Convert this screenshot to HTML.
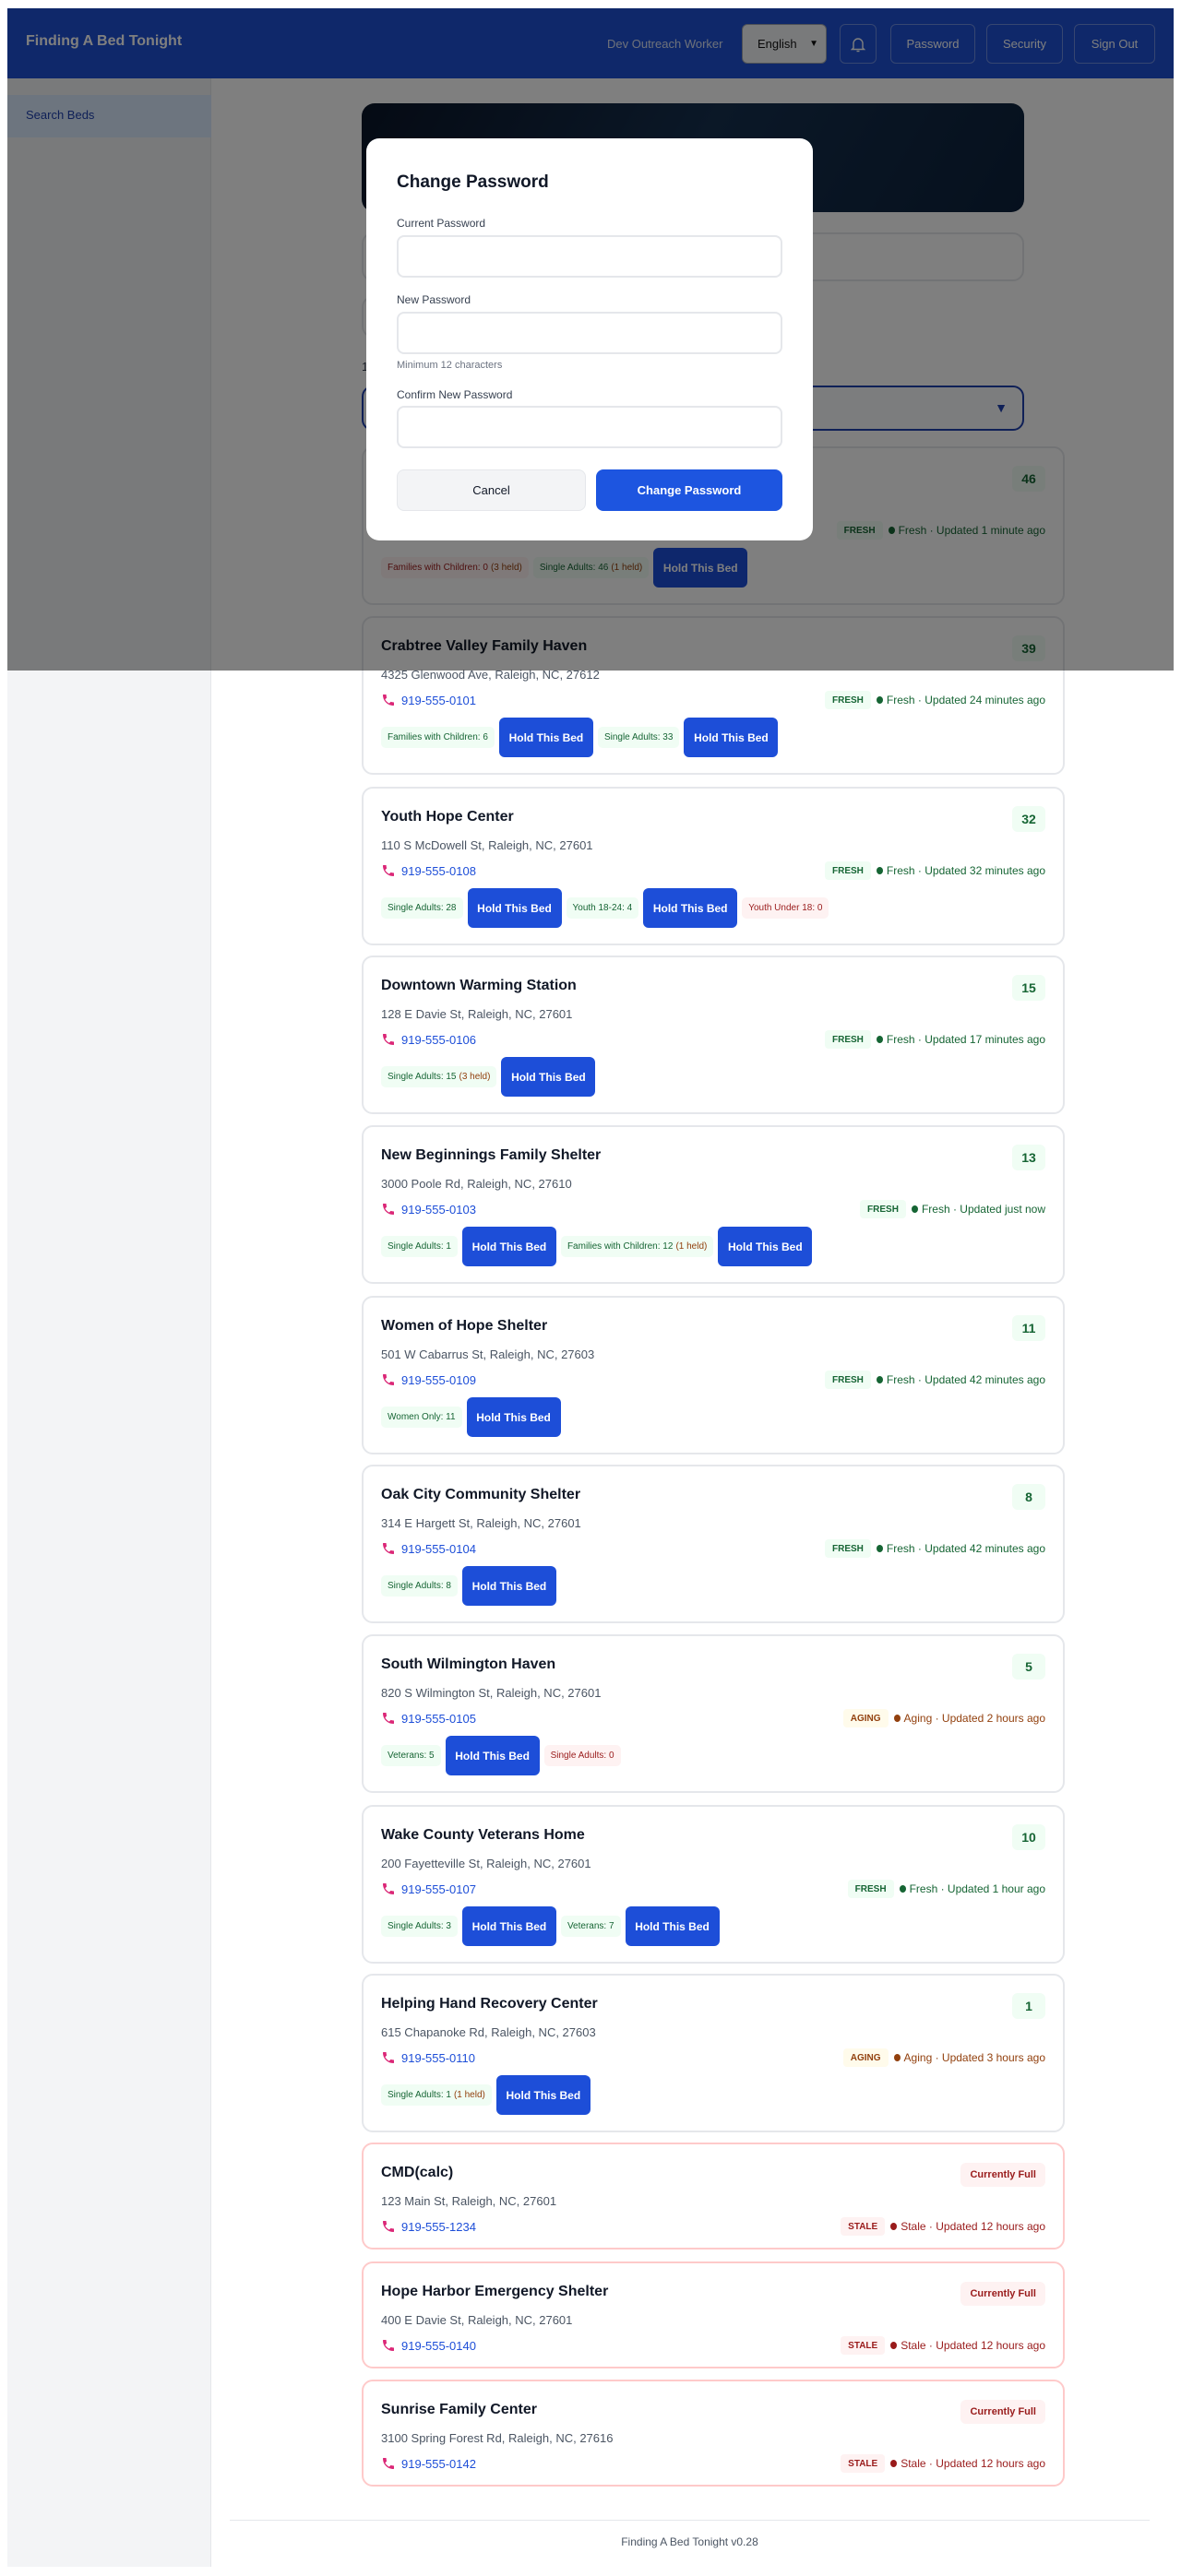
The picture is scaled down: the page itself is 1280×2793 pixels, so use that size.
<!DOCTYPE html>
<html><head><meta charset="utf-8"><style>
*{box-sizing:border-box;margin:0;padding:0}
body{width:1280px;height:2793px;position:relative;background:#fff;font-family:"Liberation Sans",sans-serif;overflow:hidden}
.hdr{position:absolute;left:8px;top:9px;width:1264px;height:76px;background:#1e50d4;color:#fff}
.hdr .t{position:absolute;left:20px;top:27px;font-weight:bold;font-size:16px}
.hdr .u{position:absolute;left:650px;top:31px;font-size:13px;color:#dbe3f5}
.hb{position:absolute;top:17px;height:43px;border:1px solid rgba(255,255,255,.35);border-radius:6px;color:#fff;font-size:13px;display:flex;align-items:center;justify-content:center}
.side{position:absolute;left:8px;top:85px;width:221px;height:2698px;background:#f3f4f6;border-right:1px solid #e5e7eb}
.side .a{position:absolute;left:0;top:18px;width:221px;height:46px;background:#dbeafe;color:#1e40af;font-size:13px;padding:14px 0 0 20px}
.hero{position:absolute;left:392px;top:112px;width:718px;height:118px;border-radius:14px;background:linear-gradient(120deg,#0a1528,#16304f 50%,#0c213b)}
.box{position:absolute;border:2px solid #e5e7eb;border-radius:12px;background:#fff}
.card{position:absolute;left:392px;width:762px;height:172px;border:2px solid #e5e7eb;border-radius:12px;background:#fff;padding:0 19px}
.card.st{height:116px;border-color:#fecaca}
.nm{position:absolute;left:19px;top:22px;font-size:16px;font-weight:bold;color:#111827}
.ad{position:absolute;left:19px;top:54px;font-size:13px;color:#4b5563}
.ph{position:absolute;left:19px;top:81px;font-size:13px;color:#1d4ed8;display:flex;align-items:center;gap:6px}
.cnt{position:absolute;right:19px;top:19px;height:28px;min-width:36px;padding:0 8px;background:#f0fdf4;color:#166534;font-weight:bold;font-size:14px;border-radius:6px;display:flex;align-items:center;justify-content:center}
.full{position:absolute;right:19px;top:20px;height:26px;padding:0 10px;background:#fef2f2;color:#991b1b;font-weight:bold;font-size:11px;border-radius:6px;display:flex;align-items:center}
.stt{position:absolute;right:19px;top:79px;display:flex;align-items:center;gap:6px;font-size:12px}
.pill{height:20px;padding:0 8px;font-size:10px;font-weight:bold;border-radius:4px;display:flex;align-items:center}
.dot{width:7px;height:8px;border-radius:50%;display:inline-block;margin-right:4px}
.g .pill{background:#f0fdf4;color:#166534}.g{color:#166534}.g .dot{background:#166534}
.y .pill{background:#fffbeb;color:#92400e}.y{color:#92400e}.y .dot{background:#92400e}
.r .pill{background:#fef2f2;color:#991b1b}.r{color:#991b1b}.r .dot{background:#991b1b}
.row{position:absolute;left:19px;top:108px;display:flex;align-items:center;gap:5px}
.ch{height:23px;padding:0 7px;font-size:10px;border-radius:5px;display:flex;align-items:center;background:#f0fdf4;color:#166534}
.ch.rd{background:#fef2f2;color:#991b1b}
.ch i{font-style:normal;color:#92400e;margin-left:3px}
.hold{width:102px;height:43px;background:#1d4ed8;color:#fff;font-weight:bold;font-size:12px;border-radius:6px;display:flex;align-items:center;justify-content:center}
.ov{position:absolute;left:8px;top:9px;width:1264px;height:718px;background:rgba(0,0,0,.5)}
.modal{position:absolute;left:397px;top:150px;width:484px;height:436px;background:#fff;border-radius:14px;padding:0 33px}
.modal h2{position:absolute;left:33px;top:187px;font-size:19px}
.lb{position:absolute;left:33px;font-size:12px;color:#374151}
.in{position:absolute;left:33px;width:418px;height:46px;border:2px solid #e5e7eb;border-radius:8px}
.btn{position:absolute;top:359px;height:45px;border-radius:8px;display:flex;align-items:center;justify-content:center;font-size:13px}
.ft{position:absolute;left:249px;top:2732px;width:997px;border-top:1px solid #e5e7eb;text-align:center;font-size:12px;color:#4b5563;padding-top:16px}
</style></head><body>
<div class="hdr"><div class="t">Finding A Bed Tonight</div><div class="u">Dev Outreach Worker</div>
<div class="hb" style="left:796px;width:92px;background:#f3f4f6;color:#111;border-color:#9ca3af;justify-content:flex-start;padding-left:16px">English<span style="position:absolute;right:8px;font-size:10px">&#9660;</span></div>
<div class="hb" style="left:902px;width:40px"><svg width="16" height="18" viewBox="0 0 16 18" fill="none" stroke="#fff" stroke-width="1.4"><path d="M3 13V8a5 5 0 0 1 10 0v5l1.5 1.5h-13z"/><path d="M6.5 16.5h3"/></svg></div>
<div class="hb" style="left:957px;width:92px">Password</div>
<div class="hb" style="left:1061px;width:83px">Security</div>
<div class="hb" style="left:1156px;width:88px">Sign Out</div>
</div>
<div class="side"><div class="a">Search Beds</div></div>
<div class="hero"></div>
<div class="box" style="left:392px;top:252px;width:718px;height:53px"></div>
<div class="box" style="left:392px;top:321px;width:300px;height:45px"></div>
<div style="position:absolute;left:392px;top:390px;font-size:13px;color:#374151">13 shelters found</div>
<div class="box" style="left:392px;top:418px;width:718px;height:49px;border-color:#1e40af;background:#f8fafc"><span style="position:absolute;right:16px;top:14px;color:#1e40af;font-size:14px">&#9660;</span></div>

<!-- cards -->
<div class="card" style="top:484px"><div class="nm">Capital Area Emergency Shelter</div><div class="ad">500 W Morgan St, Raleigh, NC, 27603</div><div class="ph"><svg width="16" height="16" viewBox="0 0 24 24"><path fill="#db2777" d="M6.6 10.8c1.4 2.8 3.8 5.1 6.6 6.6l2.2-2.2c.3-.3.7-.4 1-.2 1.1.4 2.3.6 3.6.6.6 0 1 .4 1 1V20c0 .6-.4 1-1 1C10.6 21 3 13.4 3 4c0-.6.4-1 1-1h3.5c.6 0 1 .4 1 1 0 1.3.2 2.5.6 3.6.1.3 0 .7-.2 1z"/></svg>919-555-0100</div><div class="cnt">46</div><div class="stt g"><span class="pill">FRESH</span><span><span class="dot"></span>Fresh · Updated 1 minute ago</span></div><div class="row"><span class="ch rd">Families with Children: 0<i>(3 held)</i></span><span class="ch">Single Adults: 46<i>(1 held)</i></span><span class="hold">Hold This Bed</span></div></div>

<div class="card" style="top:668px"><div class="nm">Crabtree Valley Family Haven</div><div class="ad">4325 Glenwood Ave, Raleigh, NC, 27612</div><div class="ph"><svg width="16" height="16" viewBox="0 0 24 24"><path fill="#db2777" d="M6.6 10.8c1.4 2.8 3.8 5.1 6.6 6.6l2.2-2.2c.3-.3.7-.4 1-.2 1.1.4 2.3.6 3.6.6.6 0 1 .4 1 1V20c0 .6-.4 1-1 1C10.6 21 3 13.4 3 4c0-.6.4-1 1-1h3.5c.6 0 1 .4 1 1 0 1.3.2 2.5.6 3.6.1.3 0 .7-.2 1z"/></svg>919-555-0101</div><div class="cnt">39</div><div class="stt g"><span class="pill">FRESH</span><span><span class="dot"></span>Fresh · Updated 24 minutes ago</span></div><div class="row"><span class="ch">Families with Children: 6</span><span class="hold">Hold This Bed</span><span class="ch">Single Adults: 33</span><span class="hold">Hold This Bed</span></div></div>

<div class="card" style="top:853px"><div class="nm">Youth Hope Center</div><div class="ad">110 S McDowell St, Raleigh, NC, 27601</div><div class="ph"><svg width="16" height="16" viewBox="0 0 24 24"><path fill="#db2777" d="M6.6 10.8c1.4 2.8 3.8 5.1 6.6 6.6l2.2-2.2c.3-.3.7-.4 1-.2 1.1.4 2.3.6 3.6.6.6 0 1 .4 1 1V20c0 .6-.4 1-1 1C10.6 21 3 13.4 3 4c0-.6.4-1 1-1h3.5c.6 0 1 .4 1 1 0 1.3.2 2.5.6 3.6.1.3 0 .7-.2 1z"/></svg>919-555-0108</div><div class="cnt">32</div><div class="stt g"><span class="pill">FRESH</span><span><span class="dot"></span>Fresh · Updated 32 minutes ago</span></div><div class="row"><span class="ch">Single Adults: 28</span><span class="hold">Hold This Bed</span><span class="ch">Youth 18-24: 4</span><span class="hold">Hold This Bed</span><span class="ch rd">Youth Under 18: 0</span></div></div>

<div class="card" style="top:1036px"><div class="nm">Downtown Warming Station</div><div class="ad">128 E Davie St, Raleigh, NC, 27601</div><div class="ph"><svg width="16" height="16" viewBox="0 0 24 24"><path fill="#db2777" d="M6.6 10.8c1.4 2.8 3.8 5.1 6.6 6.6l2.2-2.2c.3-.3.7-.4 1-.2 1.1.4 2.3.6 3.6.6.6 0 1 .4 1 1V20c0 .6-.4 1-1 1C10.6 21 3 13.4 3 4c0-.6.4-1 1-1h3.5c.6 0 1 .4 1 1 0 1.3.2 2.5.6 3.6.1.3 0 .7-.2 1z"/></svg>919-555-0106</div><div class="cnt">15</div><div class="stt g"><span class="pill">FRESH</span><span><span class="dot"></span>Fresh · Updated 17 minutes ago</span></div><div class="row"><span class="ch">Single Adults: 15<i>(3 held)</i></span><span class="hold">Hold This Bed</span></div></div>

<div class="card" style="top:1220px"><div class="nm">New Beginnings Family Shelter</div><div class="ad">3000 Poole Rd, Raleigh, NC, 27610</div><div class="ph"><svg width="16" height="16" viewBox="0 0 24 24"><path fill="#db2777" d="M6.6 10.8c1.4 2.8 3.8 5.1 6.6 6.6l2.2-2.2c.3-.3.7-.4 1-.2 1.1.4 2.3.6 3.6.6.6 0 1 .4 1 1V20c0 .6-.4 1-1 1C10.6 21 3 13.4 3 4c0-.6.4-1 1-1h3.5c.6 0 1 .4 1 1 0 1.3.2 2.5.6 3.6.1.3 0 .7-.2 1z"/></svg>919-555-0103</div><div class="cnt">13</div><div class="stt g"><span class="pill">FRESH</span><span><span class="dot"></span>Fresh · Updated just now</span></div><div class="row"><span class="ch">Single Adults: 1</span><span class="hold">Hold This Bed</span><span class="ch">Families with Children: 12<i>(1 held)</i></span><span class="hold">Hold This Bed</span></div></div>

<div class="card" style="top:1405px"><div class="nm">Women of Hope Shelter</div><div class="ad">501 W Cabarrus St, Raleigh, NC, 27603</div><div class="ph"><svg width="16" height="16" viewBox="0 0 24 24"><path fill="#db2777" d="M6.6 10.8c1.4 2.8 3.8 5.1 6.6 6.6l2.2-2.2c.3-.3.7-.4 1-.2 1.1.4 2.3.6 3.6.6.6 0 1 .4 1 1V20c0 .6-.4 1-1 1C10.6 21 3 13.4 3 4c0-.6.4-1 1-1h3.5c.6 0 1 .4 1 1 0 1.3.2 2.5.6 3.6.1.3 0 .7-.2 1z"/></svg>919-555-0109</div><div class="cnt">11</div><div class="stt g"><span class="pill">FRESH</span><span><span class="dot"></span>Fresh · Updated 42 minutes ago</span></div><div class="row"><span class="ch">Women Only: 11</span><span class="hold">Hold This Bed</span></div></div>

<div class="card" style="top:1588px"><div class="nm">Oak City Community Shelter</div><div class="ad">314 E Hargett St, Raleigh, NC, 27601</div><div class="ph"><svg width="16" height="16" viewBox="0 0 24 24"><path fill="#db2777" d="M6.6 10.8c1.4 2.8 3.8 5.1 6.6 6.6l2.2-2.2c.3-.3.7-.4 1-.2 1.1.4 2.3.6 3.6.6.6 0 1 .4 1 1V20c0 .6-.4 1-1 1C10.6 21 3 13.4 3 4c0-.6.4-1 1-1h3.5c.6 0 1 .4 1 1 0 1.3.2 2.5.6 3.6.1.3 0 .7-.2 1z"/></svg>919-555-0104</div><div class="cnt">8</div><div class="stt g"><span class="pill">FRESH</span><span><span class="dot"></span>Fresh · Updated 42 minutes ago</span></div><div class="row"><span class="ch">Single Adults: 8</span><span class="hold">Hold This Bed</span></div></div>

<div class="card" style="top:1772px"><div class="nm">South Wilmington Haven</div><div class="ad">820 S Wilmington St, Raleigh, NC, 27601</div><div class="ph"><svg width="16" height="16" viewBox="0 0 24 24"><path fill="#db2777" d="M6.6 10.8c1.4 2.8 3.8 5.1 6.6 6.6l2.2-2.2c.3-.3.7-.4 1-.2 1.1.4 2.3.6 3.6.6.6 0 1 .4 1 1V20c0 .6-.4 1-1 1C10.6 21 3 13.4 3 4c0-.6.4-1 1-1h3.5c.6 0 1 .4 1 1 0 1.3.2 2.5.6 3.6.1.3 0 .7-.2 1z"/></svg>919-555-0105</div><div class="cnt">5</div><div class="stt y"><span class="pill">AGING</span><span><span class="dot"></span>Aging · Updated 2 hours ago</span></div><div class="row"><span class="ch">Veterans: 5</span><span class="hold">Hold This Bed</span><span class="ch rd">Single Adults: 0</span></div></div>

<div class="card" style="top:1957px"><div class="nm">Wake County Veterans Home</div><div class="ad">200 Fayetteville St, Raleigh, NC, 27601</div><div class="ph"><svg width="16" height="16" viewBox="0 0 24 24"><path fill="#db2777" d="M6.6 10.8c1.4 2.8 3.8 5.1 6.6 6.6l2.2-2.2c.3-.3.7-.4 1-.2 1.1.4 2.3.6 3.6.6.6 0 1 .4 1 1V20c0 .6-.4 1-1 1C10.6 21 3 13.4 3 4c0-.6.4-1 1-1h3.5c.6 0 1 .4 1 1 0 1.3.2 2.5.6 3.6.1.3 0 .7-.2 1z"/></svg>919-555-0107</div><div class="cnt">10</div><div class="stt g"><span class="pill">FRESH</span><span><span class="dot"></span>Fresh · Updated 1 hour ago</span></div><div class="row"><span class="ch">Single Adults: 3</span><span class="hold">Hold This Bed</span><span class="ch">Veterans: 7</span><span class="hold">Hold This Bed</span></div></div>

<div class="card" style="top:2140px"><div class="nm">Helping Hand Recovery Center</div><div class="ad">615 Chapanoke Rd, Raleigh, NC, 27603</div><div class="ph"><svg width="16" height="16" viewBox="0 0 24 24"><path fill="#db2777" d="M6.6 10.8c1.4 2.8 3.8 5.1 6.6 6.6l2.2-2.2c.3-.3.7-.4 1-.2 1.1.4 2.3.6 3.6.6.6 0 1 .4 1 1V20c0 .6-.4 1-1 1C10.6 21 3 13.4 3 4c0-.6.4-1 1-1h3.5c.6 0 1 .4 1 1 0 1.3.2 2.5.6 3.6.1.3 0 .7-.2 1z"/></svg>919-555-0110</div><div class="cnt">1</div><div class="stt y"><span class="pill">AGING</span><span><span class="dot"></span>Aging · Updated 3 hours ago</span></div><div class="row"><span class="ch">Single Adults: 1<i>(1 held)</i></span><span class="hold">Hold This Bed</span></div></div>

<div class="card st" style="top:2323px"><div class="nm">CMD(calc)</div><div class="ad">123 Main St, Raleigh, NC, 27601</div><div class="ph"><svg width="16" height="16" viewBox="0 0 24 24"><path fill="#db2777" d="M6.6 10.8c1.4 2.8 3.8 5.1 6.6 6.6l2.2-2.2c.3-.3.7-.4 1-.2 1.1.4 2.3.6 3.6.6.6 0 1 .4 1 1V20c0 .6-.4 1-1 1C10.6 21 3 13.4 3 4c0-.6.4-1 1-1h3.5c.6 0 1 .4 1 1 0 1.3.2 2.5.6 3.6.1.3 0 .7-.2 1z"/></svg>919-555-1234</div><div class="full">Currently Full</div><div class="stt r"><span class="pill">STALE</span><span><span class="dot"></span>Stale · Updated 12 hours ago</span></div></div>

<div class="card st" style="top:2452px"><div class="nm">Hope Harbor Emergency Shelter</div><div class="ad">400 E Davie St, Raleigh, NC, 27601</div><div class="ph"><svg width="16" height="16" viewBox="0 0 24 24"><path fill="#db2777" d="M6.6 10.8c1.4 2.8 3.8 5.1 6.6 6.6l2.2-2.2c.3-.3.7-.4 1-.2 1.1.4 2.3.6 3.6.6.6 0 1 .4 1 1V20c0 .6-.4 1-1 1C10.6 21 3 13.4 3 4c0-.6.4-1 1-1h3.5c.6 0 1 .4 1 1 0 1.3.2 2.5.6 3.6.1.3 0 .7-.2 1z"/></svg>919-555-0140</div><div class="full">Currently Full</div><div class="stt r"><span class="pill">STALE</span><span><span class="dot"></span>Stale · Updated 12 hours ago</span></div></div>

<div class="card st" style="top:2580px"><div class="nm">Sunrise Family Center</div><div class="ad">3100 Spring Forest Rd, Raleigh, NC, 27616</div><div class="ph"><svg width="16" height="16" viewBox="0 0 24 24"><path fill="#db2777" d="M6.6 10.8c1.4 2.8 3.8 5.1 6.6 6.6l2.2-2.2c.3-.3.7-.4 1-.2 1.1.4 2.3.6 3.6.6.6 0 1 .4 1 1V20c0 .6-.4 1-1 1C10.6 21 3 13.4 3 4c0-.6.4-1 1-1h3.5c.6 0 1 .4 1 1 0 1.3.2 2.5.6 3.6.1.3 0 .7-.2 1z"/></svg>919-555-0142</div><div class="full">Currently Full</div><div class="stt r"><span class="pill">STALE</span><span><span class="dot"></span>Stale · Updated 12 hours ago</span></div></div>

<div class="ft">Finding A Bed Tonight v0.28</div>

<div class="ov"></div>
<div class="modal">
<h2 style="top:37px;color:#111827">Change Password</h2>
<div class="lb" style="top:85px">Current Password</div>
<div class="in" style="top:105px"></div>
<div class="lb" style="top:168px">New Password</div>
<div class="in" style="top:188px"></div>
<div class="lb" style="top:240px;font-size:11px;color:#6b7280">Minimum 12 characters</div>
<div class="lb" style="top:271px">Confirm New Password</div>
<div class="in" style="top:290px"></div>
<div class="btn" style="left:33px;width:205px;background:#f3f4f6;border:1px solid #e5e7eb;color:#111827">Cancel</div>
<div class="btn" style="left:249px;width:202px;background:#1d55e0;color:#fff;font-weight:bold">Change Password</div>
</div>
</body></html>
